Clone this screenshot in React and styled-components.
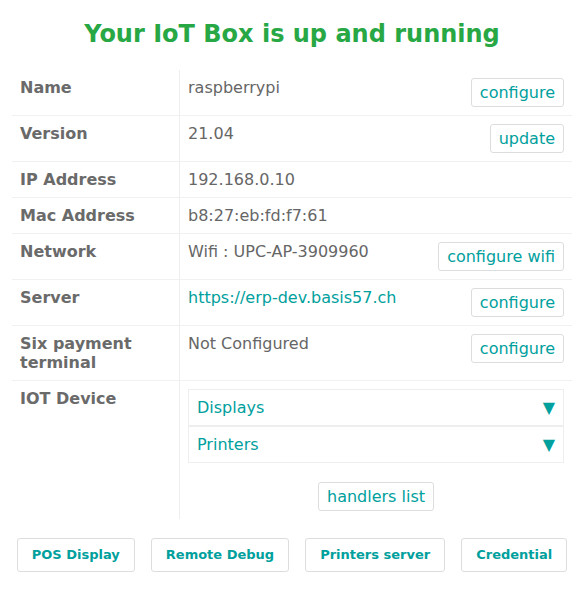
import React from 'react';
import styled, { createGlobalStyle } from 'styled-components';

const GlobalStyle = createGlobalStyle`
  body {
    margin: 0;
    background: #fff;
    font-family: "DejaVu Sans", "Liberation Sans", sans-serif;
    color: #666;
  }
`;

const Page = styled.div`
  width: 560px;
  padding: 20px 0 0 12px;
`;

const Title = styled.h2`
  margin: 0 0 22px;
  font-size: 24px;
  line-height: 28px;
  font-weight: bold;
  text-align: center;
  color: #28a745;
`;

const Table = styled.div`
  display: flex;
  flex-direction: column;
`;

const Row = styled.div`
  display: grid;
  grid-template-columns: 168px 1fr;
  border-bottom: ${(p) => (p.$last ? 'none' : '1px solid #f1f1f1')};
  font-size: 16px;
  line-height: 19px;
`;

const Label = styled.div`
  padding: 8px;
  font-weight: bold;
  color: #6a6a6a;
  border-right: 1px solid #eee;
`;

const Value = styled.div`
  padding: 8px;
  display: flex;
  justify-content: space-between;
  align-items: flex-start;
  gap: 8px;
`;

const Link = styled.a`
  color: #00a09d;
  text-decoration: none;
`;

const Button = styled.a`
  display: inline-block;
  padding: 4px 8px;
  border: 1px solid #ddd;
  border-radius: 3px;
  color: #00a09d;
  background: #fff;
  white-space: nowrap;
  text-decoration: none;
  font-size: 16px;
  line-height: 19px;
`;

const Devices = styled.div`
  display: flex;
  flex-direction: column;
  width: 100%;
`;

const DeviceItem = styled.div`
  display: flex;
  justify-content: space-between;
  padding: 8px;
  border: 1px solid #eee;
  color: #00a09d;
`;

const Caret = styled.span`
  color: #00a09d;
  font-size: 16px;
`;

const Centered = styled.div`
  text-align: center;
  margin-top: 19px;
`;

const Footer = styled.div`
  display: flex;
  justify-content: center;
  gap: 16px;
  margin-top: 19px;
`;

const FooterButton = styled.a`
  flex-shrink: 0;
  display: inline-block;
  padding: 9px 14px;
  border: 1px solid #ddd;
  border-radius: 3px;
  color: #00a09d;
  font-weight: bold;
  font-size: 13px;
  line-height: 14px;
  white-space: nowrap;
  text-decoration: none;
`;

const rows = [
  { label: 'Name', value: 'raspberrypi', action: 'configure' },
  { label: 'Version', value: '21.04', action: 'update' },
  { label: 'IP Address', value: '192.168.0.10' },
  { label: 'Mac Address', value: 'b8:27:eb:fd:f7:61' },
  { label: 'Network', value: 'Wifi : UPC-AP-3909960', action: 'configure wifi' },
  { label: 'Server', value: 'https://erp-dev.basis57.ch', link: true, action: 'configure' },
  { label: 'Six payment terminal', value: 'Not Configured', action: 'configure' },
];

const App = () => {
  return (
    <Page>
      <GlobalStyle />
      <Title>Your IoT Box is up and running</Title>
      <Table>
        {rows.map((r) => (
          <Row key={r.label}>
            <Label>{r.label}</Label>
            <Value>
              {r.link ? <Link href="#">{r.value}</Link> : <span>{r.value}</span>}
              {r.action && <Button href="#">{r.action}</Button>}
            </Value>
          </Row>
        ))}
        <Row $last>
          <Label>IOT Device</Label>
          <Value>
            <Devices>
              <DeviceItem>
                <span>Displays</span>
                <Caret>▼</Caret>
              </DeviceItem>
              <DeviceItem>
                <span>Printers</span>
                <Caret>▼</Caret>
              </DeviceItem>
              <Centered>
                <Button href="#">handlers list</Button>
              </Centered>
            </Devices>
          </Value>
        </Row>
      </Table>
      <Footer>
        <FooterButton href="#">POS Display</FooterButton>
        <FooterButton href="#">Remote Debug</FooterButton>
        <FooterButton href="#">Printers server</FooterButton>
        <FooterButton href="#">Credential</FooterButton>
      </Footer>
    </Page>
  );
};

export default App;
